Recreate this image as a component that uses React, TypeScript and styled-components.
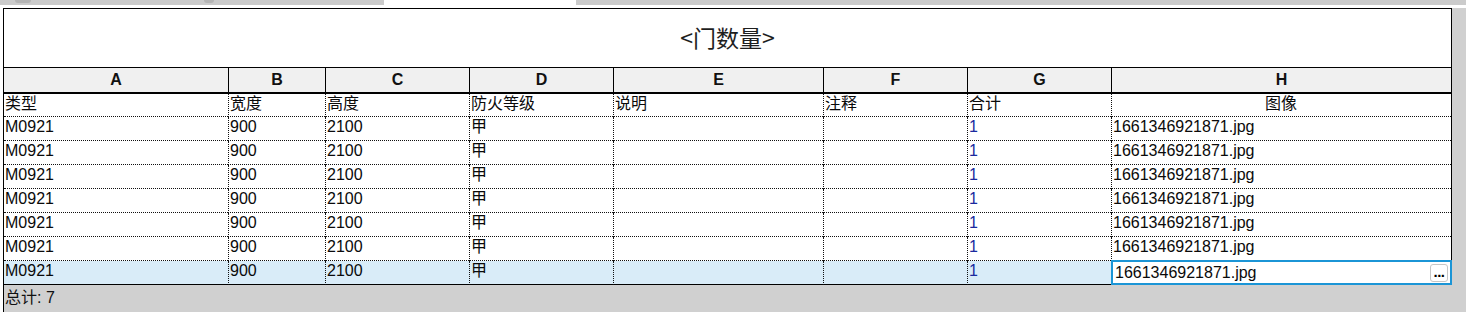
import React from 'react'
import styled, { createGlobalStyle } from 'styled-components'

const GlobalStyle = createGlobalStyle`
    html, body {
        margin: 0;
        padding: 0;
        background: #ffffff;
        overflow: hidden;
    }
    body {
        font-family: "Liberation Sans", Arial, "Noto Sans CJK SC", sans-serif;
        font-size: 16px;
        color: #000;
    }
`

const CJK = `"Liberation Sans", Arial, "Noto Sans CJK SC", sans-serif`

const COLUMNS = '224px 97px 144px 144px 210px 144px 144px 340px'
const LETTERS = ['A', 'B', 'C', 'D', 'E', 'F', 'G', 'H']
const FIELDS = ['类型', '宽度', '高度', '防火等级', '说明', '注释', '合计', '图像']

interface DoorRow {
    type: string;
    width: string;
    height: string;
    fireRating: string;
    note: string;
    comment: string;
    count: string;
    image: string;
}

const rows: DoorRow[] = Array.from({ length: 7 }, () => ({
    type: 'M0921',
    width: '900',
    height: '2100',
    fireRating: '甲',
    note: '',
    comment: '',
    count: '1',
    image: '1661346921871.jpg',
}))

const Page = styled.div`
    width: 1466px;
    height: 312px;
    display: flex;
    flex-direction: column;
`

// view tabs, only their bottom edge is left on screen
const TabStrip = styled.div`
    height: 5px;
    display: flex;
    flex-shrink: 0;
`

const Tab = styled.div<{ $active?: boolean; $width?: number }>`
    position: relative;
    background: ${p => p.$active ? '#ffffff' : '#cbcbcb'};
    ${p => p.$width ? `width: ${p.$width}px;` : 'flex: 1;'}
`

const TabIcon = styled.span<{ $left: number; $width: number }>`
    position: absolute;
    top: 0;
    left: ${p => p.$left}px;
    width: ${p => p.$width}px;
    height: 3px;
    background: #b4b4b4;
    border-radius: 0 0 3px 3px;
`

const Workspace = styled.div`
    flex: 1;
    display: flex;
    margin-top: 3px;
    min-height: 0;
`

const Gutter = styled.div`
    width: 3px;
    flex-shrink: 0;
`

const Sheet = styled.div`
    width: 1449px;
    display: flex;
    flex-direction: column;
    flex-shrink: 0;
`

const SidePanel = styled.div`
    flex: 1;
    background: #d0d0d0;
`

const TitleBox = styled.div`
    height: 60px;
    box-sizing: border-box;
    border: 1px solid #000;
    display: flex;
    align-items: center;
    justify-content: center;
    font-family: "Noto Sans CJK SC", "Liberation Sans", sans-serif;
    font-size: 23px;
    color: #1e1e1e;
    padding-bottom: 2px;
`

const Grid = styled.div`
    display: grid;
    grid-template-columns: ${COLUMNS};
    border-left: 1px solid #000;
    border-right: 1px solid #000;
`

const LetterCell = styled.div<{ $first?: boolean }>`
    height: 26px;
    box-sizing: border-box;
    background: #f0f0f0;
    border-left: ${p => p.$first ? 'none' : '1px solid #000'};
    border-bottom: 2px solid #000;
    display: flex;
    align-items: center;
    justify-content: center;
    font-weight: bold;
    font-size: 16px;
    color: #111;
`

const Cell = styled.div<{ $first?: boolean; $last?: boolean; $selected?: boolean; $center?: boolean; $blue?: boolean; $height: number }>`
    height: ${p => p.$height}px;
    box-sizing: border-box;
    padding: 1px 2px 0 1px;
    line-height: 18px;
    white-space: nowrap;
    overflow: hidden;
    font-family: ${CJK};
    font-size: 16px;
    color: ${p => p.$blue ? '#1a2a9e' : '#0a0a0a'};
    text-align: ${p => p.$center ? 'center' : 'left'};
    background: ${p => p.$selected ? '#d9ecf8' : '#ffffff'};
    border-left: ${p => p.$first ? 'none' : '1px dotted #111'};
    border-bottom: ${p => p.$last ? '1px solid #000' : '1px dotted #111'};
`

const EditorCell = styled.div`
    height: 25px;
    box-sizing: border-box;
    margin: -1px -1px -1px 0;
    border: 2px solid #1b95d6;
    background: #ffffff;
    display: flex;
    align-items: center;
    justify-content: space-between;
    padding: 0 2px 0 2px;
    font-size: 16px;
    color: #0a0a0a;
    position: relative;
    z-index: 1;
`

const BrowseButton = styled.button`
    width: 18px;
    height: 18px;
    box-sizing: border-box;
    padding: 0 0 3px 0;
    border: 1px solid #c6c6c6;
    border-radius: 3px;
    background: #ffffff;
    font-family: "Liberation Sans", sans-serif;
    font-weight: bold;
    font-size: 15px;
    line-height: 12px;
    color: #000;
    letter-spacing: -0.5px;
    display: flex;
    align-items: flex-end;
    justify-content: center;
`

const Footer = styled.div`
    flex: 1;
    background: #d0d0d0;
    border-left: 1px solid #000;
    padding: 4px 0 0 1px;
    font-family: ${CJK};
    font-size: 16px;
    line-height: 18px;
    color: #111;
`

function rowValues(r: DoorRow) {
    return [r.type, r.width, r.height, r.fireRating, r.note, r.comment, r.count, r.image]
}

export default function App() {
    return <>
        <GlobalStyle />
        <Page>
            <TabStrip>
                <Tab $width={384}>
                    <TabIcon $left={15} $width={16} />
                    <TabIcon $left={204} $width={10} />
                </Tab>
                <Tab $active $width={192} />
                <Tab />
            </TabStrip>

            <Workspace>
                <Gutter />
                <Sheet>
                    <TitleBox>&lt;门数量&gt;</TitleBox>

                    <Grid>
                        {LETTERS.map((l, i) => <LetterCell key={l} $first={i === 0}>{l}</LetterCell>)}

                        {FIELDS.map((f, i) => <Cell key={f} $height={23} $first={i === 0} $center={i === 7}>{f}</Cell>)}

                        {rows.map((r, ri) => {
                            const last = ri === rows.length - 1;
                            return rowValues(r).map((v, ci) => {
                                if (last && ci === 7) {
                                    return <EditorCell key={`${ri}-${ci}`}>
                                        <span>{v}</span>
                                        <BrowseButton>...</BrowseButton>
                                    </EditorCell>
                                }
                                return <Cell
                                    key={`${ri}-${ci}`}
                                    $height={24}
                                    $first={ci === 0}
                                    $last={last}
                                    $selected={last}
                                    $blue={ci === 6}>
                                    {v}
                                </Cell>
                            })
                        })}
                    </Grid>

                    <Footer>总计: 7</Footer>
                </Sheet>
                <SidePanel />
            </Workspace>
        </Page>
    </>
}
